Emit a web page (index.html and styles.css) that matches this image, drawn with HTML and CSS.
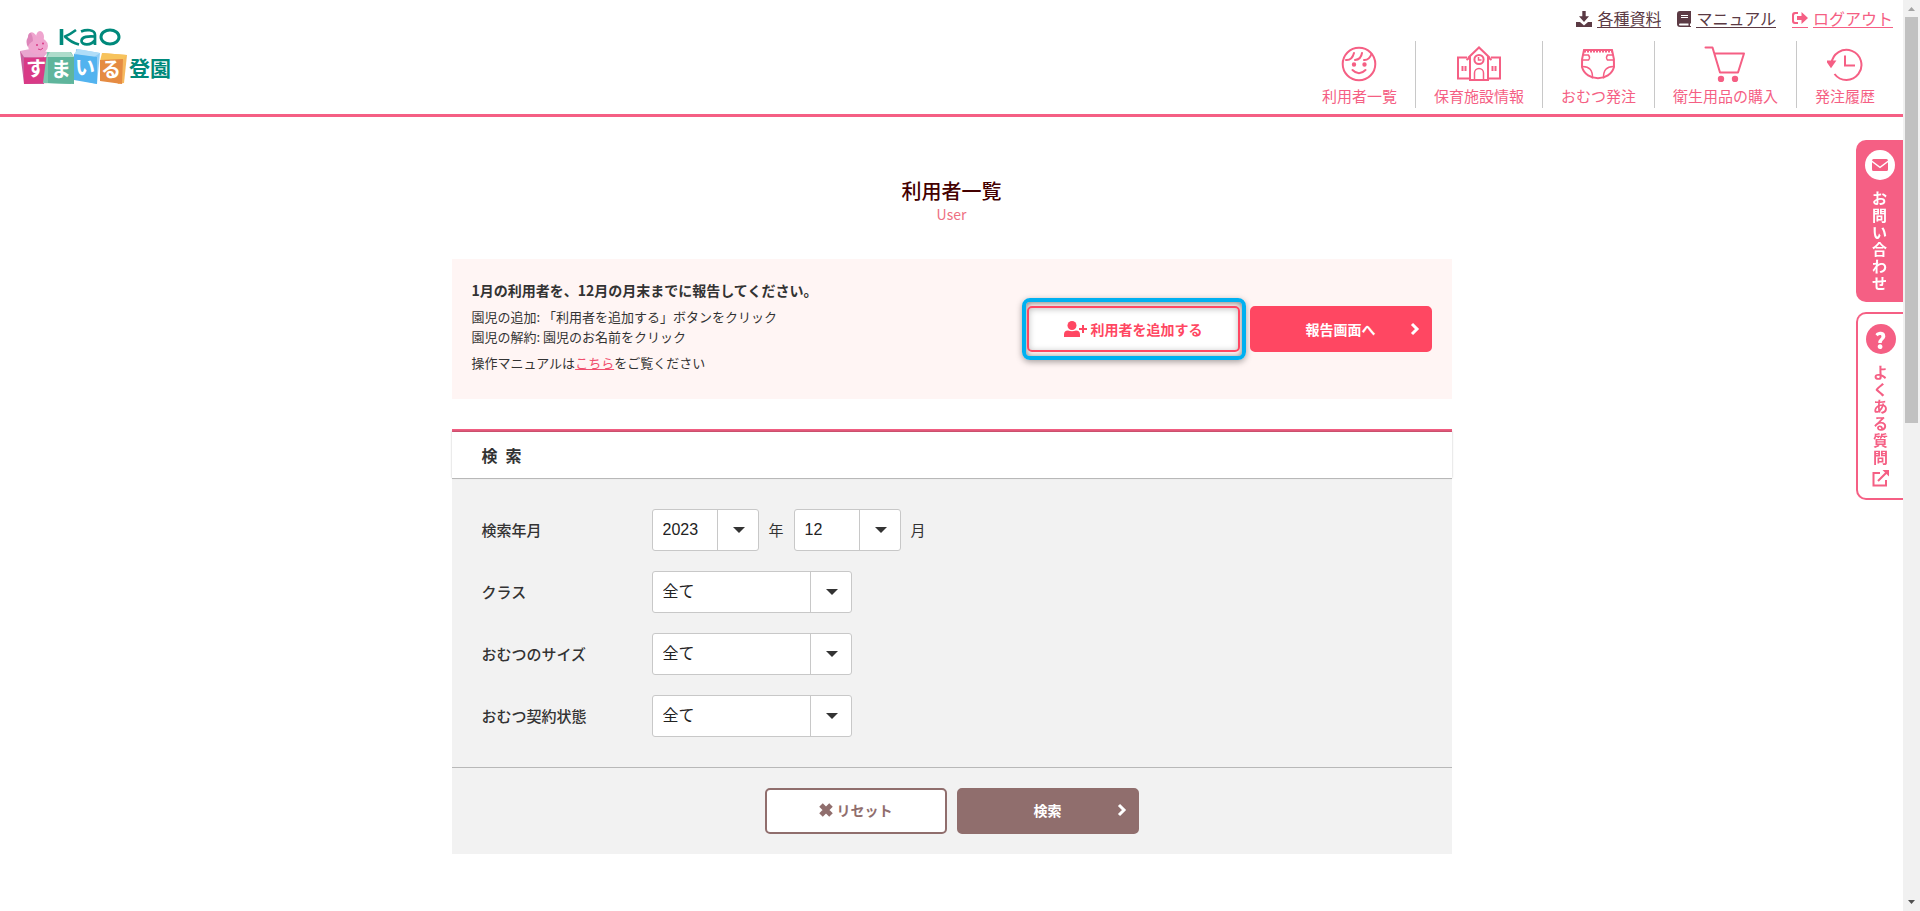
FILE: index.html
```html
<!DOCTYPE html>
<html lang="ja">
<head>
<meta charset="utf-8">
<title>利用者一覧</title>
<link rel="stylesheet" href="styles.css">
</head>
<body>
<div class="page">
  <header class="header">
    <a class="logo" href="#" aria-label="Kao すまいる登園">
      <svg class="logo-svg" viewBox="0 0 160 62" width="160" height="62">
        <g fill="none" stroke="#00897b" stroke-linecap="butt">
          <path d="M46.500 4v16" stroke-width="3.600"/>
          <path d="M61 5c-4 3-8 5.500-12 7M50 11.500c4 4 8 6.500 14 8" stroke-width="2.600"/>
          <path d="M66 6.500c5-2 14-2.500 14 3.500v10M79.500 11.500c-6-.6-13 .2-13 4.500 0 4.500 10 4.600 13-.5" stroke-width="2.700"/>
          <ellipse cx="95" cy="12" rx="9" ry="7" stroke-width="3"/>
        </g>
        <path d="M5 26l24 4v29H9z" fill="#c8629f"/>
        <path d="M5 26l10-2 18 3-5 6-19-1z" fill="#e9a6cf"/>
        <path d="M9 33l24-1v26l-24 1z" fill="#d93a86"/>
        <path d="M32 27h24l3 5-3 27-28-1z" fill="#7cc7ae"/>
        <path d="M35 27h20l4 5H32z" fill="#aedccb"/>
        <path d="M33 32h26v27l-26-1z" fill="#5fb59c"/>
        <path d="M61 24l24 4-3 31-22-5z" fill="#8fcdf6"/>
        <path d="M63 24l22 4-6 4-20-3z" fill="#b0ddf8"/>
        <path d="M59 29l23 3v27l-23-4z" fill="#52b3ef"/>
        <path d="M87 28l25 2-3 28-6 1z" fill="#f6b95f"/>
        <path d="M87 28l25 2-4 5-23 1z" fill="#f7c35c"/>
        <path d="M85 35l23-1-1 25-22-3z" fill="#e58b42"/>
        <g fill="#efa5cf">
          <ellipse cx="18" cy="13" rx="4" ry="6" transform="rotate(-25 18 13)"/>
          <ellipse cx="25" cy="12" rx="4" ry="6"/>
          <ellipse cx="23" cy="21" rx="10" ry="8.500"/>
        </g>
        <path d="M13 12q0-4 3-4 2 4 2 8-4 2-5 6-3-5 0-10z" fill="#dd86ba"/>
        <g fill="#d93a86"><circle cx="22" cy="20" r="1"/><circle cx="28" cy="18.500" r="1"/></g>
        <path d="M23 24q3 2 5-1" fill="none" stroke="#d93a86"/>
        <g class="logo-kana">
          <text x="11" y="51">す</text><text x="36" y="52">ま</text><text x="60" y="50">い</text><text x="86" y="52">る</text>
        </g>
        <text class="logo-kanji" x="114" y="51">登園</text>
      </svg>
    </a>
    <div class="header-right">
      <ul class="links">
        <li><a href="#"><svg class="link-icon" viewBox="0 0 16 16"><path d="M6.300 0h3.400v5.300H13L8 11 3 5.300h3.300zM0 11h4l4 3.500 4-3.500h4v5H0z"/></svg><span>各種資料</span></a></li>
        <li><a href="#"><svg class="link-icon book" viewBox="0 0 14 16"><path fill-rule="evenodd" d="M3 0h11v12l-1 1v2h1v1H3a3 3 0 0 1-3-3V3a3 3 0 0 1 3-3zm1 4v1h7V4zm0 2v1h7V6zM3 12.500a1 1 0 0 0 0 2h8.500v-2z"/></svg><span>マニュアル</span></a></li>
        <li><a class="logout" href="#"><span class="icon-line"><svg class="link-icon" viewBox="0 0 16 16"><path d="M6 2v2H3.500Q2 4 2 5.500v5Q2 12 3.500 12H6v2H3q-3 0-3-3V5q0-3 3-3zM9.500 2L16 8l-6.500 6v-4H5V6h4.500z"/></svg></span><span>ログアウト</span></a></li>
      </ul>
      <nav class="nav">
        <a href="#"><svg class="nav-icon" viewBox="0 0 36 36"><circle cx="18" cy="18" r="16.300"/><path d="M5 14q6 .5 8-7M14 14q6-.5 7-7M23 14q5 .5 7.500-6M11.500 24q6.500 6.500 13 0" stroke-linecap="round"/><circle class="solid" cx="13" cy="18.500" r="1.200"/><circle class="solid" cx="23.500" cy="18.500" r="1.200"/></svg>利用者一覧</a>
        <a href="#"><svg class="nav-icon school" viewBox="0 0 44 36"><path d="M10 11.500H1v21h12M34 11.500h9v21H31M13 33.500V11.500L9.500 14M31 33.500V11.500l3.500 2.500M12 34h20M11 12L22 1.500 33 12"/><circle cx="22" cy="13.500" r="4.600"/><path d="M21.500 11v3h3M17.500 33.500V27a4.500 4.500 0 0 1 9 0v6.500" stroke-width="1.500"/><path d="M5.500 20v5M8.500 20v5M35.500 20v5M38.500 20v5"/></svg>保育施設情報</a>
        <a href="#"><svg class="nav-icon" viewBox="0 0 36 36"><path d="M4 4h28c1.500 5 2.500 10 2 17-4 15-28 15-32 0-.5-7 .5-12 2-17z"/><path d="M4 5.500h28" stroke-dasharray="2 1"/><path d="M3 9h5.500q2 2.500 0 5H2M33 9h-5.500q-2 2.500 0 5H34M2 20.500q11-.5 10.500 12M34 20.500q-11-.5-10.500 12" stroke-width="1.500"/></svg>おむつ発注</a>
        <a href="#"><svg class="nav-icon cart" viewBox="0 0 42 36"><path d="M1.500 1.500h7l7.500 25h18l6-19H11" stroke-linecap="round" stroke-linejoin="round"/><circle class="solid" cx="17" cy="33" r="2.200"/><circle class="solid" cx="31" cy="33" r="2.200"/></svg>衛生用品の購入</a>
        <a href="#"><svg class="nav-icon" viewBox="0 0 36 36"><path d="M4.500 17.500A15 15 0 1 1 7.500 28"/><path class="solid" d="M.5 15.500h7l-3.500 5z"/><path d="M18 9.500v10h10"/></svg>発注履歴</a>
      </nav>
    </div>
  </header>

  <main class="main">
    <h1 class="title">利用者一覧</h1>
    <p class="subtitle">User</p>

    <section class="notice">
      <div class="notice-text">
        <h2>1月の利用者を、12月の月末までに報告してください。</h2>
        <p>園児の追加: 「利用者を追加する」ボタンをクリック<br>園児の解約: 園児のお名前をクリック</p>
        <p class="manual">操作マニュアルは<a href="#">こちら</a>をご覧ください</p>
      </div>
      <div class="notice-actions">
        <div class="focus-frame">
          <button class="btn btn-add" type="button"><svg class="user-icon" viewBox="0 0 23 16"><circle cx="8" cy="4.500" r="4.500"/><path d="M0 16v-2.500Q0 9.500 4 9.500q4 1.500 8 0 4 0 4 4V16zM18 4h2v3h3v2h-3v3h-2V9h-3V7h3z"/></svg>利用者を追加する</button>
        </div>
        <button class="btn btn-report" type="button">報告画面へ<svg class="chevron" viewBox="0 0 10 14"><path d="M2 2l5 5-5 5"/></svg></button>
      </div>
    </section>

    <form class="search">
      <h2 class="search-title">検&ensp;索</h2>
      <div class="fields">
        <label for="year">検索年月</label>
        <div class="date">
          <span class="select short"><select id="year"><option>2023</option></select></span>
          <span class="unit">年</span>
          <span class="select short"><select aria-label="月"><option>12</option></select></span>
          <span class="unit">月</span>
        </div>
        <label for="class">クラス</label>
        <span class="select"><select id="class"><option>全て</option></select></span>
        <label for="size">おむつのサイズ</label>
        <span class="select"><select id="size"><option>全て</option></select></span>
        <label for="state">おむつ契約状態</label>
        <span class="select"><select id="state"><option>全て</option></select></span>
      </div>
      <div class="search-actions">
        <button class="btn btn-reset" type="reset"><svg class="cross" viewBox="0 0 14 14"><path d="M2 2l10 10M12 2L2 12"/></svg>リセット</button>
        <button class="btn btn-search" type="button">検索<svg class="chevron" viewBox="0 0 10 14"><path d="M2 2l5 5-5 5"/></svg></button>
      </div>
    </form>
  </main>
</div>

<aside class="tabs">
  <a class="tab contact" href="#">
    <span class="circle"><svg viewBox="0 0 16 12" width="16" height="12"><path d="M1.500 0h13Q16 0 16 1.500L8 7.500 0 1.500Q0 0 1.500 0zM0 3.200l8 6 8-6v7.300q0 1.500-1.500 1.500h-13Q0 12 0 10.500z"/></svg></span>
    <span class="tab-text">お問い合わせ</span>
  </a>
  <a class="tab faq" href="#">
    <span class="circle">?</span>
    <span class="tab-text">よくある質問</span>
    <svg class="external" viewBox="0 0 17 17"><path d="M8 3H1.500v12.500H14V10M6 11l8.500-8.500"/><path class="head" d="M10.500 0H17v6.500z"/></svg>
  </a>
</aside>

<div class="scrollbar" aria-hidden="true">
  <svg viewBox="0 0 17 17"><path d="M5 11h7L8.500 7z"/></svg>
  <div class="track"><div class="thumb"></div></div>
  <svg class="down" viewBox="0 0 17 17"><path d="M5 6h7l-3.500 4z"/></svg>
</div>
</body>
</html>
```
FILE: styles.css
```css
* { box-sizing: border-box; }
body, h1, h2, p, ul { margin: 0; padding: 0; }
body {
  background: #fff;
  color: #333;
  font-family: "Noto Sans CJK JP", sans-serif;
  font-size: 15px;
  overflow: hidden;
}
a { color: inherit; }
svg { flex: none; }
.page { margin-right: 17px; }

/* Header */
.header {
  display: flex;
  justify-content: space-between;
  height: 117px;
  padding: 9px 10px 0 0;
  border-bottom: 3px solid #f55f84;
}
.logo { padding: 16px 0 0 15px; }
.logo-svg { display: block; }
.logo-kana { fill: #fff; font-size: 20px; font-weight: 700; }
.logo-kanji { fill: #00897b; font-size: 21px; font-weight: 700; }
.header-right { display: flex; flex-direction: column; align-items: flex-end; gap: 13px; }
.links { display: flex; gap: 16px; list-style: none; font-size: 16px; line-height: 23px; color: #5b3a44; }
.links a { display: flex; align-items: center; gap: 5px; text-decoration: none; }
.links span { border-bottom: 1px solid currentColor; line-height: 18px; }
.link-icon { display: block; width: 16px; height: 16px; fill: currentColor; }
.link-icon.book { width: 14px; }
.icon-line { display: flex; align-items: center; height: 19px; }
.links .logout { color: #f55f84; }
.nav { display: flex; color: #f55f84; }
.nav a {
  display: flex;
  flex-direction: column;
  align-items: center;
  gap: 3px;
  height: 67px;
  padding: 5px 18px 0;
  line-height: 22px;
  text-decoration: none;
}
.nav a + a { border-left: 1px solid #c8c8c8; }
.nav-icon { width: 36px; height: 36px; fill: none; stroke: currentColor; stroke-width: 2; }
.nav-icon.school { width: 44px; }
.nav-icon.cart { width: 42px; }
.solid { fill: currentColor; }

/* Main */
.main { max-width: 1000px; margin: 0 auto; }
.title { padding-top: 60px; text-align: center; color: #400; font-size: 20px; font-weight: 500; line-height: 28px; }
.subtitle { text-align: center; color: #ee6f82; font-size: 14px; line-height: 18px; }
.notice {
  display: flex;
  justify-content: space-between;
  margin-top: 36px;
  min-height: 140px;
  padding: 20px;
  background: #fff5f4;
}
.notice h2 { font-size: 14px; font-weight: 700; line-height: 22px; }
.notice p { margin-top: 6px; font-size: 13px; line-height: 20px; }
.manual a { color: #f0506e; }
.notice-actions { display: flex; align-items: center; gap: 4px; height: 100px; }
.focus-frame {
  padding: 4px 2px 4px 1px;
  border: 4px solid #00b0f0;
  border-radius: 8px;
  box-shadow: 0 2px 6px rgba(0, 0, 0, .35), inset 0 1px 6px rgba(0, 0, 0, .5);
}
.btn {
  display: flex;
  align-items: center;
  justify-content: center;
  position: relative;
  min-width: 182px;
  height: 46px;
  border: 2px solid currentColor;
  border-radius: 5px;
  background: #fff;
  font: 700 14px/20px "Noto Sans CJK JP", sans-serif;
}
.btn-add { min-width: 213px; gap: 4px; color: #ff4762; box-shadow: inset 0 1px 6px rgba(0, 0, 0, .25); }
.user-icon { width: 23px; height: 16px; fill: currentColor; }
.btn-report { border-color: #ff4762; background: #ff4762; color: #fff; }
.chevron { position: absolute; right: 10px; width: 10px; height: 14px; fill: none; stroke: currentColor; stroke-width: 3; }

/* Search */
.search { margin-top: 30px; border-top: 3px solid #f55f84; background: #f2f2f2; }
.search-title {
  padding: 0 30px;
  border-bottom: 1px solid #b8b8b8;
  background: #fff;
  box-shadow: 0 -1px 2px rgba(0, 0, 0, .25);
  font-size: 16px;
  font-weight: 700;
  line-height: 46px;
}
.fields {
  display: grid;
  grid-template-columns: 160px 1fr;
  gap: 20px 10px;
  align-items: center;
  padding: 30px;
  border-bottom: 1px solid #b8b8b8;
}
.fields label { padding-bottom: 2px; font-weight: 500; }
.date { display: flex; align-items: center; gap: 10px; }
.unit { padding-bottom: 2px; }
.select { display: block; position: relative; width: 200px; height: 42px; }
.select.short { width: 107px; }
.select select {
  width: 100%;
  height: 42px;
  padding: 0 50px 2px 10px;
  border: 1px solid #c8c8c8;
  border-radius: 3px;
  appearance: none;
  background: #fff;
  color: #222;
  font: 400 16px "Liberation Sans", "Noto Sans CJK JP", sans-serif;
}
.select::before { content: ""; position: absolute; top: 1px; bottom: 1px; right: 41px; border-left: 1px solid #c8c8c8; }
.select::after {
  content: "";
  position: absolute;
  top: 18px;
  right: 14px;
  border: 6px solid transparent;
  border-top-color: #333;
  border-bottom: 0;
}
.search-actions { display: flex; justify-content: center; gap: 10px; padding: 20px; }
.btn-reset { gap: 4px; color: #906e6d; }
.btn-search { border-color: #906e6d; background: #906e6d; color: #fff; }
.btn-reset, .btn-search { padding-bottom: 3px; }
.cross { width: 14px; height: 14px; stroke: currentColor; stroke-width: 5; }

/* Side tabs */
.tabs {
  display: flex;
  flex-direction: column;
  gap: 10px;
  position: fixed;
  top: 140px;
  right: 17px;
  width: 47px;
}
.tab {
  display: flex;
  flex-direction: column;
  align-items: center;
  border-radius: 10px 0 0 10px;
  font-weight: 700;
  text-decoration: none;
}
.contact { padding: 10px 0; min-height: 162px; background: #f55f84; color: #fff; }
.faq { padding: 10px 0; min-height: 188px; border: 2px solid #f55f84; border-right: 0; background: #fff; color: #f55f84; }
.circle {
  display: flex;
  align-items: center;
  justify-content: center;
  width: 30px;
  height: 30px;
  border-radius: 50%;
  background: #fff;
  fill: #f55f84;
}
.faq .circle { background: #f55f84; color: #fff; font-size: 22px; font-weight: 900; line-height: 30px; }
.tab-text { width: 15px; margin-top: 9px; line-height: 17px; word-break: break-all; }
.external { width: 17px; height: 17px; margin-top: 5px; fill: none; stroke: currentColor; stroke-width: 2; }
.head { fill: currentColor; stroke: none; }

/* Scrollbar */
.scrollbar {
  display: flex;
  flex-direction: column;
  position: fixed;
  top: 0;
  right: 0;
  bottom: 0;
  width: 17px;
  background: #f1f1f1;
}
.scrollbar svg { width: 17px; height: 17px; fill: #a3a3a3; }
.scrollbar .down { fill: #505050; }
.track { flex: 1; padding: 0 2px; }
.thumb { height: 46.3%; background: #c1c1c1; }
```
